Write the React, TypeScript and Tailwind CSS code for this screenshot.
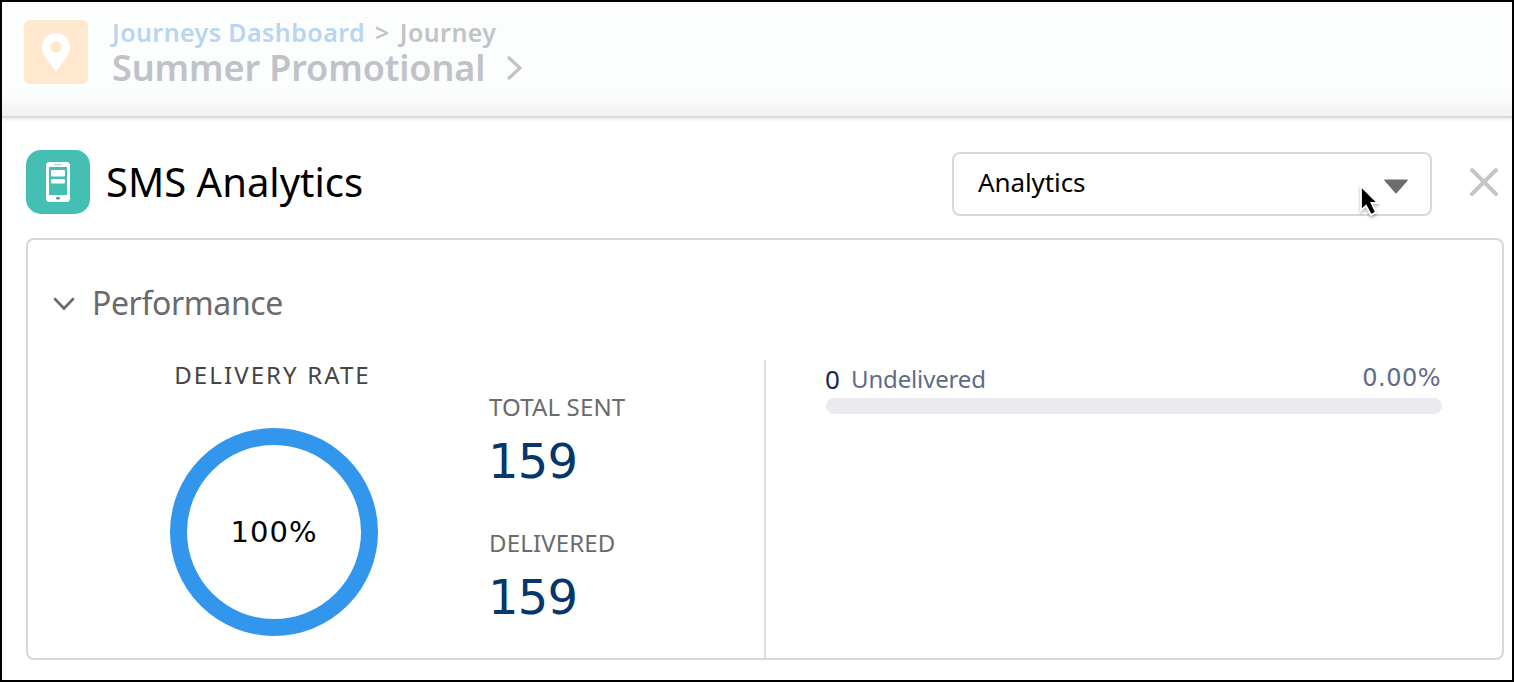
interface StatProps {
  label: string
  value: number
}

function Stat({ label, value }: StatProps) {
  return (
    <div>
      <div className="text-[24px] leading-8 tracking-[0.15px] text-[#6b6b6b]">{label}</div>
      <div className="mt-[8px] -ml-px font-['DejaVu_Sans',sans-serif] text-[48px] leading-[60px] tracking-[-0.8px] text-[#05376b]">{value}</div>
    </div>
  )
}

function JourneyHeader() {
  return (
    <header className="flex h-[116px] shrink-0 border-b-2 border-[#dadada] bg-linear-to-b from-[#fbfefd] from-80% to-[#f2f2f2] pl-[22px] pt-[14px] shadow-[0_1px_4px_rgba(0,0,0,0.12)]">
      <div className="mt-1 flex size-16 items-center justify-center rounded-[6px] bg-[#ffe8cd]">
        <svg width="28" height="38" viewBox="0 0 28 38" fill="#fff">
          <path
            fillRule="evenodd"
            d="M14 0C6.3 0 0 6.1 0 13.8 0 22.6 7.4 28.6 12.2 36.6c.9 1.500 2.700 1.500 3.600 0C20.600 28.600 28 22.600 28 13.800 28 6.100 21.700 0 14 0Zm0 8.200a5.700 5.700 0 1 1 0 11.400 5.700 5.700 0 0 1 0-11.400Z"
          />
        </svg>
      </div>
      <div className="ml-6 font-semibold whitespace-nowrap">
        <div className="flex text-[25px] leading-8 tracking-[0.42px]">
          <span className="text-[#b9d5ef]">Journeys Dashboard</span>
          <span className="ml-[10px] text-[#c3c3c7]">&gt;</span>
          <span className="ml-[10px] text-[#c3c3c7]">Journey</span>
        </div>
        <div className="mt-[2px] flex items-center text-[36px] leading-9 tracking-[-0.1px] text-[#c0c1c9]">
          <span>Summer Promotional</span>
          <svg className="ml-[21px]" width="18" height="26" viewBox="0 0 18 26" fill="none" stroke="#c4c4c6" strokeWidth="3.2">
            <path d="M2 2l12 11L2 24" />
          </svg>
        </div>
      </div>
    </header>
  )
}

function TitleBar() {
  return (
    <div className="flex h-[68px] items-start pl-6 pr-[13px]">
      <div className="flex size-16 items-center justify-center rounded-[15px] bg-[#45bfb3]">
        <svg width="24" height="40" viewBox="0 0 24 40">
          <rect width="24" height="40" rx="3.500" fill="#fff" />
          <path d="M3 5h18v28H3z" fill="#45bfb3" />
          <rect x="8" y="2" width="8" height="1.200" rx=".6" fill="#9edfd8" />
          <rect x="5" y="8" width="14" height="6.500" rx="1" fill="#fff" />
          <rect x="5" y="17" width="14" height="4.500" rx="1" fill="#fff" />
          <rect x="10" y="35" width="4" height="2.500" rx="1" fill="#5f9d98" />
        </svg>
      </div>
      <h1 className="ml-4 mt-[2px] text-[40px] leading-[60px] text-black">SMS Analytics</h1>
      <div className="relative ml-auto mt-[2px] flex h-16 w-[480px] items-center justify-between rounded-[8px] border-2 border-[#d8d8d8] bg-white pl-6 pr-[22px]">
        <span className="pb-1 text-[26px] leading-8 tracking-[-0.1px] text-black">Analytics</span>
        <svg className="mt-1" width="24" height="15" viewBox="0 0 24 15" fill="#6d6d6d">
          <path d="M1 .5h22c.7 0 1 .6.500 1.200L12.800 14c-.4.500-1.100.5-1.500 0L.5 1.700C0 1.100.3.500 1 .5Z" />
        </svg>
        <svg className="absolute left-[404px] top-[28px] drop-shadow-[0_2px_1.500px_rgba(0,0,0,0.3)]" width="24" height="38" viewBox="0 0 24 38">
          <path d="M3 4v24.500l5-4.800 5 9.300 5-2.600-4.500-9.400h6.500Z" fill="#000" stroke="#fff" strokeWidth="1.800" />
        </svg>
      </div>
      <svg className="ml-[37px] mt-[17px]" width="30" height="30" viewBox="0 0 30 30" stroke="#c6c6c6" strokeWidth="4" strokeLinecap="round">
        <path d="M3 3l24 24M27 3L3 27" />
      </svg>
    </div>
  )
}

function DeliveryRate() {
  return (
    <div className="flex w-[208px] flex-col items-center">
      <div className="mr-[3px] whitespace-nowrap text-[24px] leading-[30px] tracking-[2.1px] text-[#444]">DELIVERY RATE</div>
      <div className="mt-[38px] flex size-[208px] items-center justify-center rounded-full border-[17px] border-[#3296ed] pt-[2px] font-['DejaVu_Sans',sans-serif] text-[29px] tracking-[1px] text-black">
        100%
      </div>
    </div>
  )
}

function Undelivered() {
  return (
    <div className="flex-1 pl-[60px] pr-[60px] pt-[2px]">
      <div className="flex h-9 justify-between text-[24px] leading-[34px] text-[#5f6c88]">
        <div className="flex">
          <span className="-ml-px w-[16px] text-[26px] text-[#16294b]">0</span>
          <span className="ml-[10px] tracking-[-0.15px]">Undelivered</span>
        </div>
        <span className="mr-px font-['DejaVu_Sans',sans-serif] leading-[33px] tracking-[0.5px]">0.00%</span>
      </div>
      <div className="h-4 rounded-full bg-[#e9ebf1]" />
    </div>
  )
}

export default function App() {
  return (
    <div className="flex h-[682px] w-[1514px] flex-col overflow-hidden border-2 border-black bg-white font-['Noto_Sans','Open_Sans',sans-serif]">
      <JourneyHeader />
      <main className="flex flex-1 flex-col pt-8">
        <TitleBar />
        <section className="ml-6 mt-5 h-[422px] w-[1478px] rounded-[8px] border-2 border-[#d8d8d8]">
          <div className="flex h-[120px] items-start pl-[25px] pt-[42px]">
            <svg className="mt-[15px]" width="22" height="14" viewBox="0 0 22 14" fill="none" stroke="#6b6b6b" strokeWidth="2.600" strokeLinecap="round">
              <path d="M2 2l9 9.500L20 2" />
            </svg>
            <h2 className="ml-[17px] mt-px text-[32px] leading-10 tracking-[-0.4px] text-[#6b6b6b]">Performance</h2>
          </div>
          <div className="flex h-[298px]">
            <div className="flex w-[738px] border-r-2 border-[#dcdcdc] pl-[142px]">
              <DeliveryRate />
              <div className="ml-[111px] flex flex-col gap-[36px] pt-[31px]">
                <Stat label="TOTAL SENT" value={159} />
                <Stat label="DELIVERED" value={159} />
              </div>
            </div>
            <Undelivered />
          </div>
        </section>
      </main>
    </div>
  )
}
